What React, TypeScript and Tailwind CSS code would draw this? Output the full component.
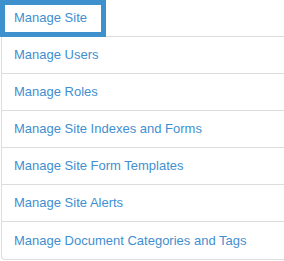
const items = [
  'Manage Site',
  'Manage Users',
  'Manage Roles',
  'Manage Site Indexes and Forms',
  'Manage Site Form Templates',
  'Manage Site Alerts',
  'Manage Document Categories and Tags',
];

export default function App() {
  return (
    <div className="relative w-[284px] h-[261px] overflow-hidden bg-white font-['Liberation_Sans',Arial,sans-serif]">
      <ul className="ml-[1px] w-[300px] border-l border-b border-[#dddddd] rounded-b-[4px]">
        {items.map((label, i) => (
          <li
            key={label}
            className={`h-[37px] flex items-center pl-[12px] text-[13px] text-[#3f8fd0] ${
              i < items.length - 1 ? 'border-b border-[#dddddd]' : ''
            }`}
          >
            {label}
          </li>
        ))}
      </ul>
      {/* focus ring on the active item */}
      <div className="absolute left-0 top-0 w-[106px] h-[37px] border-[5px] border-[#3d91cc]" />
    </div>
  );
}
